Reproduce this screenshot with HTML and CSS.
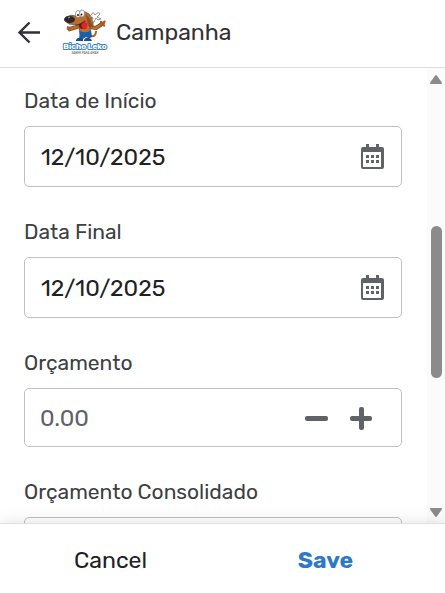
FILE: index.html
```html
<!DOCTYPE html>
<html lang="pt">
<head>
<meta charset="utf-8">
<meta name="viewport" content="width=device-width, initial-scale=1">
<title>Campanha</title>
<link rel="stylesheet" href="styles.css">
</head>
<body>
<form class="app">
  <header class="header">
    <button class="icon-button" type="button" aria-label="Voltar">
      <svg width="24" height="24" viewBox="0 0 24 24" fill="none" stroke="#323236" stroke-width="2.4"><path d="M24 12.500H3.500M13.500 2.500L3.500 12.500l10 10"/></svg>
    </button>
    <svg class="logo" width="46" height="46" viewBox="0 -2 46 46" role="img" aria-label="Bicho Leko">
      <path d="M29 25q5 1 5-5" fill="none" stroke="#ad6429" stroke-width="2"/>
      <path d="M18 15L8 18M27 16l7 1 6-4" fill="none" stroke="#71431f" stroke-width="4" stroke-linecap="round"/>
      <path d="M18 15L8 18M27 16l7 1 6-4" fill="none" stroke="#bd7130" stroke-width="2.600" stroke-linecap="round"/>
      <path d="M5 16l3 1-2 1 2 2M39 10v3l4-3-2 4 2 1" fill="none" stroke="#a85c28" stroke-width="2"/>
      <path d="M18 14q-2 6 1 12h8q3-6 0-13z" fill="#bd7130" stroke="#71431f" stroke-width=".7"/>
      <path d="M16 2q6-3 11 1 5 5 4 13-4 1-6-4-4 7-10 2l-8-1q-5-3-3-7 5-3 10-1z" fill="#b96d2e" stroke="#71431f" stroke-width=".7"/>
      <path d="M24 3q5 5 7 13-5 1-6-7z" fill="#8f4e20"/>
      <ellipse cx="7.500" cy="8.500" rx="5.500" ry="3.500" fill="#29282a"/>
      <path d="M6 7l2-1" stroke="#aaa" stroke-width="1"/>
      <ellipse cx="16" cy="3" rx="2.500" ry="3.500" fill="#fff" stroke="#777" stroke-width=".7"/>
      <ellipse cx="20" cy="2.500" rx="2.500" ry="3.500" fill="#fff" stroke="#777" stroke-width=".7"/>
      <circle cx="16" cy="4" r=".9"/><circle cx="19.500" cy="3.500" r=".9"/>
      <path d="M12 13q7 1 11-4 2 8-3 9-3-1-3-4z" fill="#551f19"/>
      <path d="M19 14l4-4q4 5 1 8-4 1-5-4z" fill="#e5202b"/>
      <path d="M30 3q1-3 3 1 4-4 5-1l-3 3 4 2-3 1-2-2-2 4q-3 0-1-4l-3-2z" fill="#fff" stroke="#777" stroke-width=".8"/>
      <path d="M18 20q6 3 11-1l1 7-4 2-1-3-4 3h-4z" fill="#1761ac"/>
      <path d="M14 29q2-4 7-1v2h-7zM22 29q2-4 7-1l1 2h-8z" fill="#174d94"/>
      <text class="logo-name" x="23" y="38">Bicho Leko</text>
      <text class="logo-tagline" x="23" y="43">SABER PARA AMAR</text>
    </svg>
    <h1 class="title">Campanha</h1>
  </header>

  <div class="viewport">
    <main class="fields">
      <div class="field">
        <label for="start">Data de Início</label>
        <div class="control">
          <input id="start" type="text" value="12/10/2025">
          <button class="icon-button" type="button" aria-label="Escolher data de início">
            <svg width="24" height="26" viewBox="0 0 24 26"><path fill="#5f6368" fill-rule="evenodd" d="M5 0h3v3h7V0h3v3h3q2 0 2 2v18q0 2-2 2H2q-2 0-2-2V5q0-2 2-2h3zM2 8v15h18V8zM5 11h3v3H5zm5 0h3v3h-3zm5 0h3v3h-3zM5 16h3v3H5zm5 0h3v3h-3zm5 0h3v3h-3z"/></svg>
          </button>
        </div>
      </div>
      <div class="field">
        <label for="end">Data Final</label>
        <div class="control">
          <input id="end" type="text" value="12/10/2025">
          <button class="icon-button" type="button" aria-label="Escolher data final">
            <svg width="24" height="26" viewBox="0 0 24 26"><path fill="#5f6368" fill-rule="evenodd" d="M5 0h3v3h7V0h3v3h3q2 0 2 2v18q0 2-2 2H2q-2 0-2-2V5q0-2 2-2h3zM2 8v15h18V8zM5 11h3v3H5zm5 0h3v3h-3zm5 0h3v3h-3zM5 16h3v3H5zm5 0h3v3h-3zm5 0h3v3h-3z"/></svg>
          </button>
        </div>
      </div>
      <div class="field">
        <label for="budget">Orçamento</label>
        <div class="control control-number">
          <input id="budget" type="text" inputmode="decimal" placeholder="0.00">
          <button class="icon-button" type="button" aria-label="Diminuir">
            <svg width="24" height="24" viewBox="0 0 24 24"><rect x="0" y="10" width="23" height="5" rx="2" fill="#5f6368"/></svg>
          </button>
          <button class="icon-button" type="button" aria-label="Aumentar">
            <svg width="24" height="24" viewBox="0 0 24 24" fill="#5f6368"><rect x="1" y="10" width="22" height="5" rx="2"/><rect x="10" y="1" width="5" height="23" rx="2"/></svg>
          </button>
        </div>
      </div>
      <div class="field">
        <label for="total">Orçamento Consolidado</label>
        <div class="control control-number">
          <input id="total" type="text" inputmode="decimal">
        </div>
      </div>
    </main>
    <div class="scrollbar" aria-hidden="true">
      <svg width="14" height="11" viewBox="0 0 14 11"><path d="M7 2l5 7H2z" fill="#8b8b8b" stroke="#8b8b8b" stroke-width="2" stroke-linejoin="round"/></svg>
      <div class="rail"><div class="thumb"></div></div>
      <svg width="14" height="11" viewBox="0 0 14 11"><path d="M7 9l5-7H2z" fill="#8b8b8b" stroke="#8b8b8b" stroke-width="2" stroke-linejoin="round"/></svg>
    </div>
  </div>

  <footer class="footer">
    <button class="action" type="button">Cancel</button>
    <button class="action action-save" type="submit">Save</button>
  </footer>
</form>
</body>
</html>
```
FILE: styles.css
```css
* {
  box-sizing: border-box;
}

body {
  margin: 0;
  color: #202124;
  background: #fff;
  font-family: Rubik, Roboto, sans-serif;
}

button,
input {
  padding: 0;
  border: 0;
  background: none;
  color: inherit;
  font: inherit;
}

svg {
  display: block;
}

.app {
  display: flex;
  flex-direction: column;
  height: 100vh;
}

.header {
  display: flex;
  flex: none;
  align-items: center;
  padding: 9px 16px 12px;
  border-bottom: 1px solid #dadce0;
}

.icon-button {
  flex: none;
}

.logo {
  margin: 0 8px 0 22px;
}

.logo-name,
.logo-tagline {
  text-anchor: middle;
}

.logo-name {
  fill: #fff;
  stroke: #3b7fca;
  stroke-width: 2px;
  paint-order: stroke;
  font-size: 8px;
  font-weight: 700;
}

.logo-tagline {
  fill: #555;
  font-size: 3px;
  font-weight: 400;
}

.title {
  margin: 0;
  color: #323236;
  font-size: 23px;
  font-weight: 400;
  line-height: 32px;
}

.viewport {
  display: flex;
  flex: 1;
  min-height: 0;
}

.fields {
  display: flex;
  flex: 1;
  flex-direction: column;
  gap: 32px;
  min-width: 0;
  padding: 20px 25px 0 24px;
  overflow: hidden;
}

.field {
  display: flex;
  flex: none;
  flex-direction: column;
  gap: 12px;
}

.field label {
  color: #3c4043;
  font-size: 21px;
  line-height: 26px;
}

.control {
  display: flex;
  align-items: center;
  gap: 20px;
  padding: 16px;
  border: 1px solid #bdc1c6;
  border-radius: 5px;
}

.control input {
  flex: 1;
  min-width: 0;
  height: 27px;
  outline: 0;
  font-size: 23px;
}

.control-number {
  padding: 15px 28px 15px 15px;
}

.control input::placeholder {
  color: #5f6368;
  opacity: 1;
}

.scrollbar {
  display: flex;
  flex: none;
  flex-direction: column;
  align-items: center;
  width: 18px;
  padding: 6px 0 5px;
  background: #fbfbfb;
}

.rail {
  display: flex;
  flex: 1;
  flex-direction: column;
}

.rail::before {
  flex: 141;
  content: "";
}

.rail::after {
  flex: 129;
  content: "";
}

.thumb {
  flex: 151;
  width: 11px;
  border-radius: 6px;
  background: #8b8b8b;
}

.footer {
  display: grid;
  flex: none;
  grid-template-columns: 1fr 1fr;
  padding: 8px 12px 5px 3px;
  border-top: 1px solid #e0e0e0;
  background: #fff;
  box-shadow: 0 0 16px rgb(0 0 0 / 12%);
}

.action {
  height: 56px;
  font-size: 23px;
}

.action-save {
  color: #2d78c8;
  font-weight: 700;
}
```
